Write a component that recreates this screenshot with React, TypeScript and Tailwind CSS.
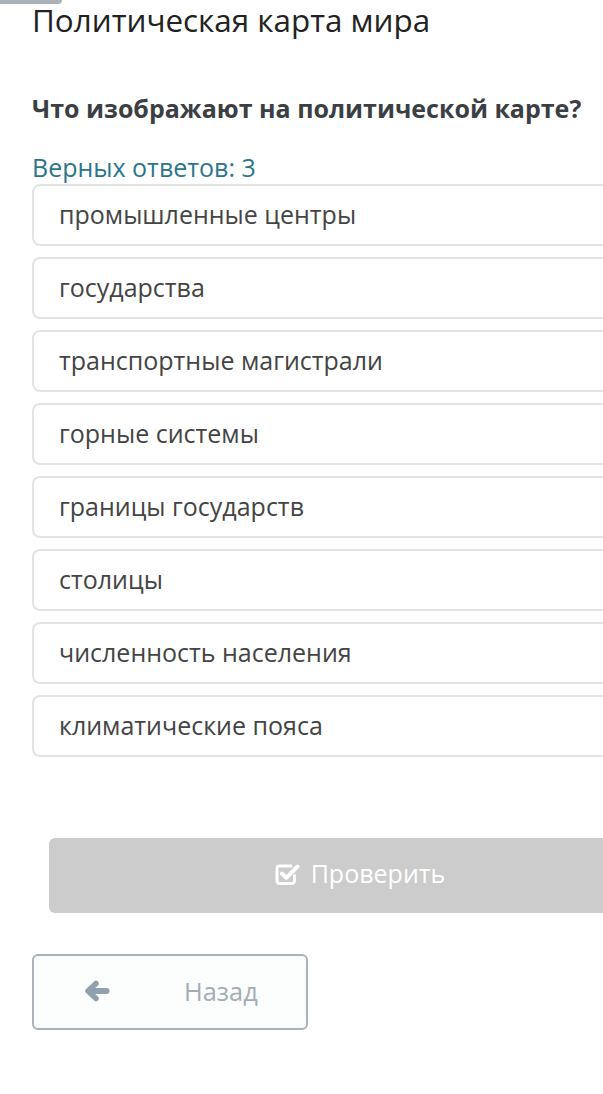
import React from 'react';

const options = [
  'промышленные центры',
  'государства',
  'транспортные магистрали',
  'горные системы',
  'границы государств',
  'столицы',
  'численность населения',
  'климатические пояса',
];

function CheckSquareIcon() {
  return (
    <svg width="26" height="24" viewBox="0 0 26 24" fill="none">
      <path
        d="M19.5 13.5V19a2.5 2.5 0 0 1-2.5 2.5H4.5A2.5 2.5 0 0 1 2 19V6.5A2.5 2.5 0 0 1 4.5 4H16"
        stroke="white"
        strokeWidth="3"
        strokeLinecap="round"
      />
      <path
        d="M7 11.5l4.3 4.3L22.5 4.5"
        stroke="white"
        strokeWidth="4"
        strokeLinecap="round"
        strokeLinejoin="round"
      />
    </svg>
  );
}

function ArrowLeftIcon() {
  return (
    <svg width="26" height="22" viewBox="0 0 26 22" fill="none" stroke="#8fa1af" strokeLinecap="round" strokeLinejoin="round">
      <path d="M22.5 11H6" strokeWidth="6" />
      <path d="M12 3.5L4 11l8 7.5" strokeWidth="5.5" />
    </svg>
  );
}

export default function App() {
  return (
    <div className="w-[603px] h-[1094px] overflow-hidden bg-white relative font-['Open_Sans',sans-serif]">
      {/* верхняя полоска вкладки */}
      <div className="absolute left-0 top-0 w-[62px] h-[4px] bg-[#aab3ba] rounded-br-[4px]" />

      <div className="pl-[32px] w-[660px]">
        <h1 className="pt-[1px] text-[31.4px] leading-[38px] text-[#222] font-normal">Политическая карта мира</h1>

        <h2 className="mt-[54px] text-[25px] leading-[30px] font-bold text-[#3b3f44]">
          Что изображают на политической карте?
        </h2>

        <div className="mt-[30px] text-[25px] leading-[28px] text-[#2b7688]">Верных ответов: 3</div>

        <div className="mt-[3px] flex flex-col gap-[11px]">
          {options.map(o => (
            <div
              key={o}
              className="h-[62px] border-2 border-[#e2e4e4] rounded-[8px] flex items-center pl-[25px] text-[25px] text-[#444] bg-white"
            >
              {o}
            </div>
          ))}
        </div>

        <div className="mt-[81px] ml-[17px] w-[622px] h-[75px] bg-[#cccccc] rounded-[6px] flex items-center justify-center gap-[10px] text-white text-[25px] pb-[3px]">
          <CheckSquareIcon />
          <span>Проверить</span>
        </div>

        <div className="mt-[41px] w-[276px] h-[76px] border-2 border-[#a9b2b8] rounded-[6px] bg-[#fcfdfd] flex items-center pb-[2px]">
          <div className="ml-[50px]">
            <ArrowLeftIcon />
          </div>
          <span className="ml-[74px] text-[25.4px] text-[#a3adb5]">Назад</span>
        </div>
      </div>
    </div>
  );
}
